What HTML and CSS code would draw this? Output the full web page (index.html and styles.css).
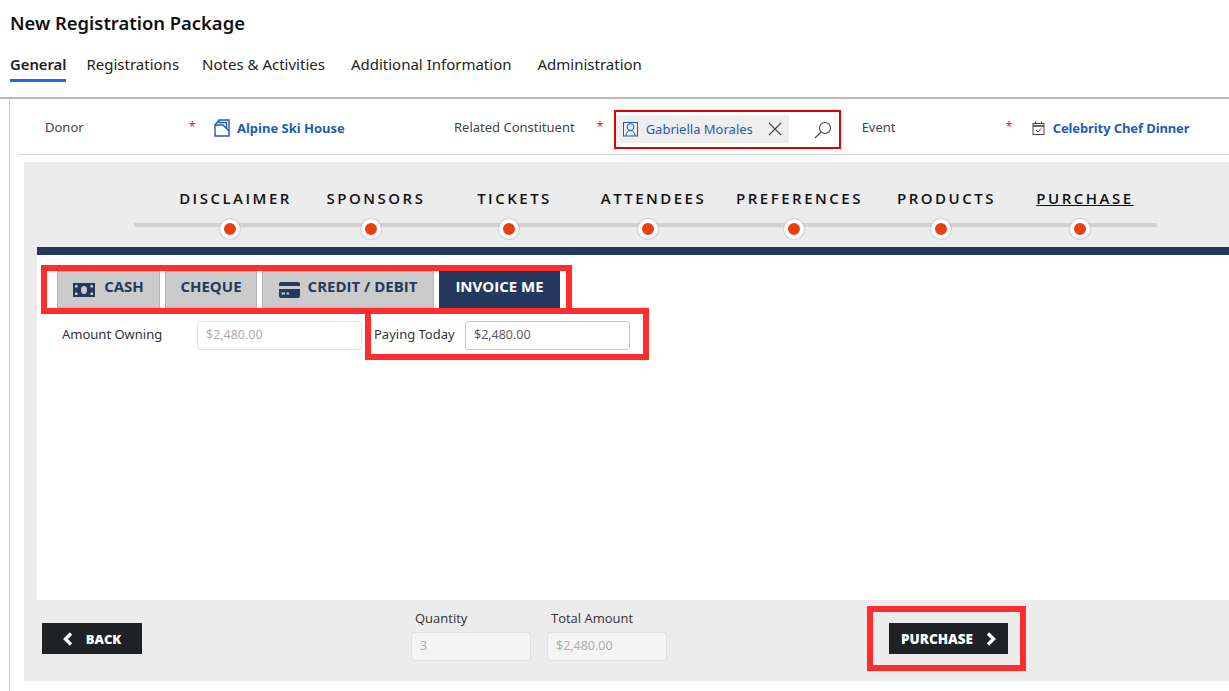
FILE: index.html
```html
<!DOCTYPE html>
<html lang="en">
<head>
    <meta charset="UTF-8">
    <title>New Registration Package</title>
    <link rel="stylesheet" href="styles.css">
</head>
<body>
    <header class="page-header">
        <h1 class="page-title">New Registration Package</h1>
        <nav class="tabs">
            <a class="tab tab-active">General</a>
            <a class="tab tab-registrations">Registrations</a>
            <a class="tab tab-notes">Notes &amp; Activities</a>
            <a class="tab tab-additional">Additional Information</a>
            <a class="tab">Administration</a>
        </nav>
    </header>

    <main class="content">
        <!-- Lookup fields -->
        <section class="fields">
            <span class="field-label label-donor">Donor</span>
            <span class="required req-donor">*</span>
            <a class="lookup lookup-donor">
                <svg class="lookup-icon" width="16" height="18" viewBox="0 0 16 18" fill="none" stroke="#1f5bb5" stroke-width="1.4"><path d="M1 6V17H15V12L9 6Z"/><path d="M1 6L5 1H15V12"/><path d="M5 1V3.500H12.500V9.500"/></svg>
                Alpine Ski House
            </a>
            <span class="field-label label-related">Related Constituent</span>
            <span class="required req-related">*</span>
            <div class="lookup-box annotate-thin">
                <div class="chip">
                    <svg width="15" height="16" viewBox="0 0 15 16" fill="none" stroke="#1f5bb5" stroke-width="1"><rect x="0.5" y="1.5" width="14" height="13.5"/><circle cx="7.5" cy="6" r="3.4"/><path d="M2.8 15C3.2 11.5 5 9.6 7.5 9.6S11.8 11.5 12.2 15"/></svg>
                    <span class="chip-name">Gabriella Morales</span>
                    <svg class="chip-close" width="14" height="14" viewBox="0 0 14 14" fill="none" stroke="#444" stroke-width="1.1"><path d="M1 1L13 13M13 1L1 13"/></svg>
                </div>
                <svg class="search-icon" width="18" height="18" viewBox="0 0 18 18" fill="none" stroke="#444" stroke-width="1.1"><circle cx="11" cy="7" r="5.5"/><path d="M7 11L1 17"/></svg>
            </div>
            <span class="field-label label-event">Event</span>
            <span class="required req-event">*</span>
            <a class="lookup lookup-event">
                <svg class="lookup-icon" width="13" height="14" viewBox="0 0 13 14" fill="none" stroke="#444" stroke-width="1"><rect x="1" y="2.5" width="11" height="11"/><path d="M1 5H12" stroke-width="1.6"/><path d="M3.5 0.5V3M9.5 0.5V3"/><path d="M4 9L5.8 11L9 7.5"/></svg>
                Celebrity Chef Dinner
            </a>
        </section>

        <section class="wizard">
            <!-- Steps -->
            <div class="steps">
                <div class="step"><span class="step-name">DISCLAIMER</span><span class="step-dot"></span></div>
                <div class="step"><span class="step-name">SPONSORS</span><span class="step-dot"></span></div>
                <div class="step"><span class="step-name">TICKETS</span><span class="step-dot"></span></div>
                <div class="step"><span class="step-name">ATTENDEES</span><span class="step-dot"></span></div>
                <div class="step"><span class="step-name">PREFERENCES</span><span class="step-dot"></span></div>
                <div class="step"><span class="step-name">PRODUCTS</span><span class="step-dot"></span></div>
                <div class="step"><span class="step-name step-current">PURCHASE</span><span class="step-dot"></span></div>
            </div>

            <div class="pay-panel">
                <div class="pay-tabs annotate">
                    <button class="pay-tab pay-cash">
                        <svg width="22" height="14" viewBox="0 0 22 14"><path fill="#25395f" fill-rule="evenodd" d="M0 0H22V14H0ZM11 3A3 4 0 1 0 11 11A3 4 0 1 0 11 3ZM2 2V4.500H4.500V2ZM17.500 2V4.500H20V2ZM2 9.500V12H4.500V9.500ZM17.500 9.500V12H20V9.500Z"/></svg>
                        <span class="pay-text">CASH</span>
                    </button>
                    <button class="pay-tab pay-cheque"><span class="pay-text">CHEQUE</span></button>
                    <button class="pay-tab pay-credit">
                        <svg width="21" height="16" viewBox="0 0 21 16"><path fill="#25395f" fill-rule="evenodd" d="M2 0H19A2 2 0 0 1 21 2V4H0V2A2 2 0 0 1 2 0ZM0 7H21V14A2 2 0 0 1 19 16H2A2 2 0 0 1 0 14ZM2.500 10.500V12.500H6V10.500ZM7.500 10.500V12.500H10V10.500Z"/></svg>
                        <span class="pay-text">CREDIT / DEBIT</span>
                    </button>
                    <button class="pay-tab pay-invoice"><span class="pay-text">INVOICE ME</span></button>
                </div>
                <div class="amounts">
                    <label class="amount-label">Amount Owning</label>
                    <input class="amount-input amount-owning" type="text" value="$2,480.00" disabled>
                    <div class="paying annotate">
                        <label class="paying-label">Paying Today</label>
                        <input class="amount-input amount-paying" type="text" value="$2,480.00">
                    </div>
                </div>
            </div>

            <div class="wizard-footer">
                <button class="nav-btn btn-back">
                    <svg width="10" height="14" viewBox="0 0 10 14" fill="none" stroke="#fff" stroke-width="3.4"><path d="M8 1.500L2.500 7L8 12.500"/></svg>
                    <span class="btn-text">BACK</span>
                </button>
                <div class="totals">
                    <div class="total total-qty">
                        <label class="total-label">Quantity</label>
                        <input class="total-input" type="text" value="3" disabled>
                    </div>
                    <div class="total">
                        <label class="total-label">Total Amount</label>
                        <input class="total-input" type="text" value="$2,480.00" disabled>
                    </div>
                </div>
                <div class="purchase-wrap annotate">
                    <button class="nav-btn btn-purchase">
                        <span class="btn-text">PURCHASE</span>
                        <svg width="10" height="14" viewBox="0 0 10 14" fill="none" stroke="#fff" stroke-width="3.4"><path d="M2 1.500L7.500 7L2 12.500"/></svg>
                    </button>
                </div>
            </div>
        </section>
    </main>
</body>
</html>
```

FILE: styles.css
```css
/* General Styles */
* {
    box-sizing: border-box;
}

html, body {
    height: 100%;
}

body {
    margin: 0;
    overflow: hidden;
    background-color: #fff;
    color: #222;
    font-family: "Noto Sans", "Open Sans", sans-serif;
}

/* Page header */
.page-header {
    height: 99px;
    padding: 11px 0 0 10px;
    border-bottom: 2px solid #b8b8b8;
}

.page-title {
    margin: 0;
    font-size: 18.4px;
    line-height: 24px;
    font-weight: 600;
    color: #111;
}

.tabs {
    display: flex;
    margin-top: 17px;
}

.tab {
    font-size: 15px;
    line-height: 24px;
    padding-bottom: 3px;
    color: #222;
}

.tab-active {
    margin-right: 20px;
    font-size: 14.8px;
    font-weight: 600;
    border-bottom: 3px solid #2266e3;
}

.tab-registrations {
    margin-right: 23px;
}

.tab-notes,
.tab-additional {
    margin-right: 26px;
}

/* Lookup fields */
.content {
    margin-left: 9px;
    height: 592px;
    padding: 3px 0 0 0;
    border-left: 1px solid #ccc;
}

.fields {
    display: flex;
    align-items: center;
    height: 53px;
    margin-left: 9px;
    border-bottom: 1px solid #d6d6d6;
    font-size: 13px;
    position: relative;
}

.field-label {
    margin-top: -2px;
    color: #444;
}

.label-donor {
    margin-left: 26px;
    width: 144px;
}

.required {
    color: #e02020;
    font-size: 12px;
    margin-top: -4px;
}

.req-donor {
    width: 25px;
}

.lookup {
    display: flex;
    align-items: center;
    gap: 7px;
    color: #1f5bb5;
    font-weight: 700;
    font-size: 13px;
}

.lookup-donor {
    width: 240px;
}

.req-related {
    margin-left: 22px;
    width: 17px;
}

.lookup-box {
    display: flex;
    align-items: center;
    width: 227px;
    height: 39px;
    margin-top: 3px;
    padding: 3px 2px 3px 2px;
}

.chip {
    display: flex;
    align-items: center;
    width: 173px;
    height: 28px;
    margin-top: -1px;
    padding-left: 7px;
    background: #eee;
    color: #1f5bb5;
}

.chip-name {
    margin-left: 8px;
    margin-top: -1px;
    width: 122px;
}

.search-icon {
    margin-left: 25px;
}

.label-event {
    margin-left: 21px;
    width: 144px;
}

.req-event {
    width: 26px;
}

.lookup-event {
    gap: 8px;
    letter-spacing: -0.1px;
}

/* Wizard */
.wizard {
    margin: 7px 0 0 14px;
    height: 519px;
    background: #ececec;
    display: flex;
    flex-direction: column;
}

.steps {
    position: relative;
    display: grid;
    grid-template-columns: 141px 140px 137px 141px 151px 143px 134px;
    height: 85px;
    padding: 25px 0 0 141px;
}

/* track behind the dots */
.steps::before {
    content: "";
    position: absolute;
    left: 110px;
    top: 61px;
    width: 1023px;
    height: 4px;
    background: #d2d2d2;
}

.step {
    display: flex;
    flex-direction: column;
    align-items: center;
    position: relative;
}

.step-name {
    font-family: "Open Sans", sans-serif;
    font-size: 15px;
    line-height: 22px;
    font-weight: 600;
    letter-spacing: 2.5px;
    color: #111;
}

.step-current {
    text-decoration: underline;
}

.step-dot {
    width: 20px;
    height: 20px;
    margin-top: 10px;
    margin-right: 11px;
    border-radius: 50%;
    background: #e8400c;
    border: 4px solid #fff;
    box-shadow: 0 0 2px #999;
}

.pay-panel {
    flex: 1;
    margin-left: 13px;
    background: #fff;
    border-top: 8px solid #25395f;
}

.pay-tabs {
    display: flex;
    gap: 5px;
    width: 531px;
    height: 49px;
    margin: 10px 0 0 4px;
    padding: 6px 0 0 16px;
    position: relative;
}

.pay-tab {
    display: flex;
    align-items: center;
    justify-content: center;
    gap: 9px;
    height: 37px;
    padding: 0;
    border: 1px solid #b5b5b5;
    background: #cbcbcb;
    color: #25395f;
    font-family: "Open Sans", sans-serif;
    font-size: 15px;
    font-weight: 700;
}

.pay-text {
    margin-top: -7px;
}

.pay-cash { width: 103px; }
.pay-cheque { width: 92px; }
.pay-credit { width: 172px; gap: 8px; }

.pay-invoice {
    width: 121px;
    border-color: #25395f;
    background: #25395f;
    color: #fff;
}

.amounts {
    display: flex;
    align-items: flex-start;
    margin-top: -6px;
    margin-left: 25px;
}

.amount-label {
    width: 135px;
    margin-top: 17px;
    font-size: 13px;
    color: #333;
}

.amount-input {
    width: 165px;
    height: 29px;
    padding: 0 8px 2px;
    border-radius: 3px;
    font-family: "Open Sans", sans-serif;
    font-size: 12.5px;
    background: #fff;
}

.amount-owning {
    margin-top: 13px;
    border: 1px solid #e4e4e4;
    color: #aaa;
}

.amount-paying {
    margin-top: 7px;
    border: 1px solid #c8c8c8;
    color: #555;
}

.paying {
    display: flex;
    align-items: flex-start;
    width: 284px;
    height: 52px;
    margin-left: 3px;
    padding: 6px 0 0 9px;
}

.paying-label {
    width: 91px;
    margin-top: 11px;
    font-size: 13px;
    color: #333;
}

.wizard-footer {
    display: flex;
    height: 81px;
    padding-left: 18px;
}

.nav-btn {
    display: flex;
    align-items: center;
    justify-content: center;
    height: 31px;
    border: 0;
    padding: 0;
    background: #1e2224;
    color: #fff;
    font-family: "Open Sans", sans-serif;
    font-size: 13.5px;
    font-weight: 800;
}

.btn-text {
    margin-top: 1px;
}

.btn-back {
    width: 100px;
    gap: 13px;
    margin-top: 23px;
    font-size: 13px;
}

.btn-purchase {
    width: 119px;
    gap: 13px;
}

.totals {
    display: flex;
    gap: 16px;
    margin-left: 269px;
    margin-top: 9px;
}

.total {
    width: 120px;
    display: flex;
    flex-direction: column;
}

.total-label {
    font-family: "Open Sans", sans-serif;
    font-size: 13px;
    line-height: 18px;
    padding-left: 4px;
    color: #333;
}

.total-input {
    width: 120px;
    height: 29px;
    margin-top: 5px;
    padding: 0 8px 2px;
    border: 1px solid #e0e0e0;
    border-radius: 3px;
    background: #f4f4f4;
    color: #aaa;
    font-family: "Open Sans", sans-serif;
    font-size: 12.5px;
}

.purchase-wrap {
    width: 159px;
    height: 65px;
    margin: 6px 0 0 200px;
    padding: 17px 0 0 22px;
}

/* Red review boxes drawn over the form */
.annotate {
    outline: 6px solid #ff2d2d;
    outline-offset: -6px;
}

.annotate-thin {
    outline: 2px solid #e00000;
    outline-offset: -2px;
}
```
